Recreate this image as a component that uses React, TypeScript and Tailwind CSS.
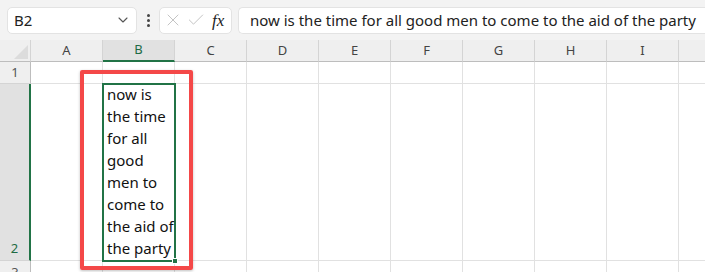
import { ChevronDown, X, Check } from "lucide-react";

const cols = ["A", "B", "C", "D", "E", "F", "G", "H", "I", ""];
const lines = ["now is", "the time", "for all", "good", "men to", "come to", "the aid of", "the party"];

const font = { fontFamily: '"Noto Sans", "Open Sans", sans-serif' };

const App = () => {
  return (
    <div className="w-[705px] h-[272px] overflow-hidden bg-white relative" style={font}>
      {/* formula bar */}
      <div className="h-[40px] bg-[#f3f3f3] flex items-center pl-[7px] gap-[6px]">
        <div className="w-[130px] h-[27px] bg-white rounded-[5px] border border-[#e3e3e3] flex items-center justify-between pl-[6px] pr-[5px]">
          <span className="text-[15px] text-[#222]">B2</span>
          <ChevronDown size={16} strokeWidth={1.6} className="text-[#555]" />
        </div>
        <div className="w-[10px] flex flex-col items-center gap-[2px]">
          <span className="w-[3px] h-[3px] bg-[#444] rounded-full" />
          <span className="w-[3px] h-[3px] bg-[#444] rounded-full" />
          <span className="w-[3px] h-[3px] bg-[#444] rounded-full" />
        </div>
        <div className="w-[73px] h-[27px] bg-white rounded-[5px] border border-[#e3e3e3] flex items-center pl-[3px] gap-[3px]">
          <X size={20} strokeWidth={1.2} className="text-[#c4c4c4]" />
          <Check size={20} strokeWidth={1.2} className="text-[#c4c4c4]" />
          <span className="text-[17px] italic text-[#222] ml-[3px] leading-none" style={{ fontFamily: '"Liberation Serif", serif' }}>
            fx
          </span>
        </div>
        <div className="flex-1 h-[27px] bg-white rounded-l-[5px] border border-r-0 border-[#e3e3e3] flex items-center pl-[11px]">
          <span className="text-[15px] text-[#222] whitespace-nowrap">
            now is the time for all good men to come to the aid of the party
          </span>
        </div>
      </div>

      {/* sheet */}
      <div className="grid grid-cols-[31px_repeat(10,72px)] grid-rows-[22px_22px_177px_22px]">
        {/* column headers */}
        <div className="bg-[#efefef] border-b border-[#bdbdbd] border-r border-r-[#d4d4d4] relative">
          <div className="absolute right-[2px] bottom-[2px] w-0 h-0 border-l-[14px] border-l-transparent border-b-[14px] border-b-[#dcdcdc]" />
        </div>
        {cols.map((c, i) =>
          c === "B" ? (
            <div
              key={i}
              className="bg-[#e1e1e1] border-b-2 border-[#217346] border-r border-r-[#d4d4d4] flex items-center justify-center text-[13px] text-[#1e6b44]"
            >
              {c}
            </div>
          ) : (
            <div
              key={i}
              className="bg-[#efefef] border-b border-[#bdbdbd] border-r border-r-[#d4d4d4] flex items-center justify-center text-[13px] text-[#444]"
            >
              {c}
            </div>
          )
        )}

        {/* row 1 */}
        <div className="bg-[#efefef] border-b border-[#d4d4d4] border-r border-r-[#bdbdbd] flex items-center justify-center text-[13px] text-[#555]">
          1
        </div>
        {cols.map((c, i) => (
          <div key={i} className="border-b border-r border-[#e1e1e1]" />
        ))}

        {/* row 2 */}
        <div className="bg-[#e1e1e1] border-b border-[#d4d4d4] border-r-2 border-r-[#217346] flex items-end justify-center pb-[2px] text-[13px] text-[#1e6b44]">
          2
        </div>
        {cols.map((c, i) =>
          c === "B" ? (
            <div key={i} className="border-b border-r border-[#e1e1e1] relative">
              <div className="absolute -left-[1px] -top-[1px] w-[74px] h-[179px] border-2 border-[#217346] flex flex-col justify-end pl-[3px] pb-[1px]">
                {lines.map((l) => (
                  <div key={l} className="text-[15px] leading-[22px] text-[#111] whitespace-nowrap">
                    {l}
                  </div>
                ))}
                <div className="absolute -right-[4px] -bottom-[4px] w-[6px] h-[6px] bg-[#217346] border border-white" />
              </div>
            </div>
          ) : (
            <div key={i} className="border-b border-r border-[#e1e1e1]" />
          )
        )}

        {/* row 3 */}
        <div className="bg-[#efefef] border-r border-[#bdbdbd] flex items-start justify-center pt-[2px] text-[13px] text-[#555]">
          3
        </div>
        {cols.map((c, i) => (
          <div key={i} className="border-r border-[#e1e1e1]" />
        ))}
      </div>

      {/* red annotation */}
      <div className="absolute left-[80px] top-[70px] w-[113px] h-[200px] border-[4px] border-[#f44848] rounded-[2px] shadow-[0_1px_3px_rgba(0,0,0,0.25)]" />
    </div>
  );
};

export default App;
